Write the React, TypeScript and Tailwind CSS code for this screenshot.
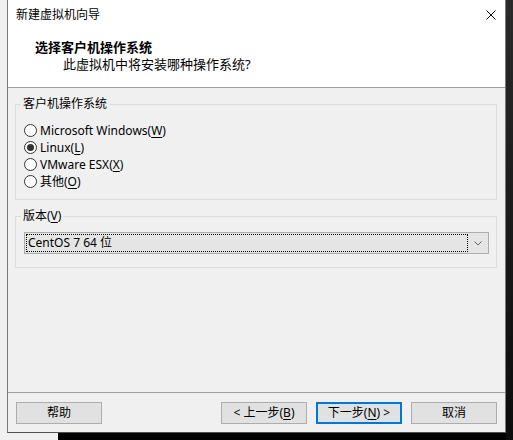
import React from "react";

function U({ children }: { children: React.ReactNode }) {
  return <span className="underline underline-offset-[2px]">{children}</span>;
}

function Radio({ checked, label }: { checked?: boolean; label: React.ReactNode }) {
  return (
    <div className="flex h-[17px] items-center">
      <span className="flex h-[13px] w-[13px] items-center justify-center rounded-full border border-[#333333] bg-white">
        {checked && <span className="h-[7px] w-[7px] rounded-full bg-[#333333]" />}
      </span>
      <span className="ml-[3px] text-[12px] leading-[17px]">{label}</span>
    </div>
  );
}

function Btn({ children, primary }: { children: React.ReactNode; primary?: boolean }) {
  return (
    <button
      className={
        primary
          ? "flex h-[22px] w-[86px] items-center justify-center border-2 border-[#0078d7] bg-[#e1e1e1] text-[12px] text-black"
          : "flex h-[22px] w-[86px] items-center justify-center border border-[#adadad] bg-[#e1e1e1] text-[12px] text-black"
      }
    >
      {children}
    </button>
  );
}

export default function App() {
  return (
    <div className="flex h-[440px] w-[513px] bg-black font-['Noto_Sans','Noto_Sans_CJK_SC',sans-serif] text-black">
      <div className="w-[7px] bg-[#f0f0f0]" />
      <div className="flex w-[499px] flex-col">
        <div className="flex h-[433px] flex-col border-x border-b border-x-[#7a7a7a] border-b-[#505050] bg-[#f0f0f0]">
          {/* header */}
          <div className="flex h-[87px] flex-col bg-white">
            <div className="flex h-[30px] items-center justify-between pl-[8px] pr-[9px]">
              <span className="text-[12px] leading-[30px]">新建虚拟机向导</span>
              <svg width="10" height="10" viewBox="0 0 10 10" className="block">
                <path d="M0.5 0.5 L9.5 9.5 M9.5 0.5 L0.5 9.5" stroke="#000" strokeWidth="1" />
              </svg>
            </div>
            <div className="mt-[9px] pl-[27px] text-[13px] font-bold leading-[17px]">选择客户机操作系统</div>
            <div className="pl-[55px] text-[13px] leading-[17px]">此虚拟机中将安装哪种操作系统?</div>
          </div>
          <div className="h-px bg-[#a0a0a0]" />
          {/* body */}
          <div className="flex flex-1 flex-col pl-[7px] pr-[8px] pt-[8px]">
            <fieldset className="border border-[#dcdcdc] pb-[9px] pl-[5px] pr-[7px] pt-[10px]">
              <legend className="px-[2px] text-[12px] leading-[16px]">客户机操作系统</legend>
              <div className="ml-[3px] flex flex-col">
                <Radio label={<>Microsoft Windows(<U>W</U>)</>} />
                <Radio checked label={<>Linux(<U>L</U>)</>} />
                <Radio label={<>VMware ESX(<U>X</U>)</>} />
                <Radio label={<>其他(<U>O</U>)</>} />
              </div>
            </fieldset>
            <fieldset className="mt-[8px] border border-[#dcdcdc] pb-[13px] pl-[5px] pr-[7px] pt-[8px]">
              <legend className="px-[2px] text-[12px] leading-[16px]">
                版本(<U>V</U>)
              </legend>
              <div className="ml-[3px] flex h-[22px] items-stretch border border-[#adadad] bg-[#e5e5e5] p-px">
                <div className="flex flex-1 items-center border border-dotted border-black pl-[1px] text-[12px]">
                  CentOS 7 64 位
                </div>
                <div className="flex w-[19px] items-center justify-center">
                  <svg width="8" height="5" viewBox="0 0 8 5" className="block">
                    <path d="M0.5 0.5 L4 4 L7.5 0.5" stroke="#606060" strokeWidth="1" fill="none" />
                  </svg>
                </div>
              </div>
            </fieldset>
          </div>
          <div className="h-px bg-[#a0a0a0]" />
          {/* footer */}
          <div className="flex items-center justify-between pb-[8px] pl-[8px] pr-[8px] pt-[9px]">
            <Btn>帮助</Btn>
            <div className="flex gap-[9px]">
              <Btn>
                &lt; 上一步(<U>B</U>)
              </Btn>
              <Btn primary>
                下一步(<U>N</U>) &gt;
              </Btn>
              <Btn>取消</Btn>
            </div>
          </div>
        </div>
        <div className="flex h-[7px]">
          <div className="w-[51px] bg-[#f0f0f0]" />
          <div className="flex-1 bg-black" />
        </div>
      </div>
      <div className="flex-1 bg-gradient-to-b from-[#2b2b2b] to-[#0c0c0c]" />
    </div>
  );
}
